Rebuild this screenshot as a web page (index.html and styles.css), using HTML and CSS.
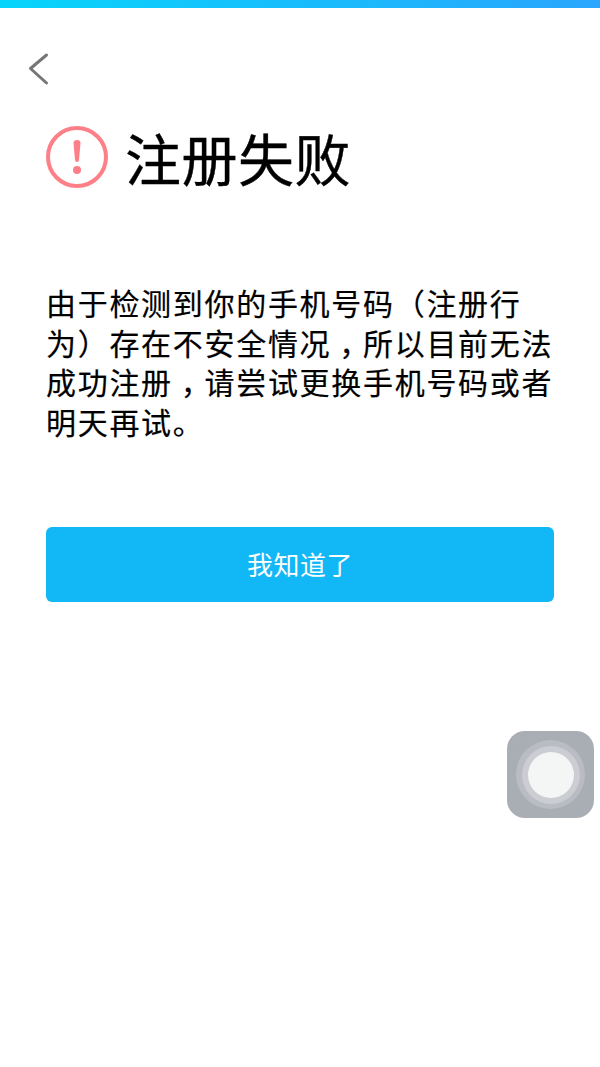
FILE: index.html
```html
<!DOCTYPE html>
<html lang="zh-CN">
<head>
    <meta charset="UTF-8">
    <title>注册失败</title>
    <link rel="stylesheet" href="styles.css">
</head>
<body>

<div class="top-bar"></div>

<div class="back-row">
    <svg class="back-icon" width="24" height="36" viewBox="0 0 24 36">
        <path d="M19.5 3 L3.5 16.5 L19.5 31" fill="none" stroke="#767676" stroke-width="3" stroke-linecap="round" stroke-linejoin="round"/>
    </svg>
</div>

<div class="content">
    <div class="title-row">
        <svg class="warn-icon" width="62" height="62" viewBox="0 0 62 62">
            <circle cx="31" cy="31" r="29" fill="none" stroke="#fd7f87" stroke-width="4"/>
            <path d="M27.5 17 Q27.5 14 31 14 Q34.5 14 34.5 17 L33 34 Q32.8 36 31 36 Q29.2 36 29 34 Z" fill="#fd7f87"/>
            <circle cx="31" cy="44" r="4" fill="#fd7f87"/>
        </svg>
        <h1>注册失败</h1>
    </div>

    <p class="message">由于检测到你的手机号码（注册行为）存在不安全情况<span class="comma">，</span>所以目前无法成功注册<span class="comma">，</span>请尝试更换手机号码或者明天再试。</p>

    <button class="ok-btn">我知道了</button>
</div>

<div class="float-ball">
    <div class="ring-outer">
        <div class="ring-inner">
            <div class="ball-core"></div>
        </div>
    </div>
</div>

</body>
</html>
```

FILE: styles.css
```css
body {
    margin: 0;
    height: 1067px;
    position: relative;
    overflow: hidden;
    background-color: #fff;
    font-family: "Noto Sans CJK SC", "Noto Sans", sans-serif;
    color: #000;
}

.top-bar {
    height: 8px;
    background: linear-gradient(to right, #06d5fb, #2aa5fd);
}

.back-row {
    padding: 44px 0 0 27px;
    height: 36px;
}

.back-icon {
    display: block;
}

.content {
    padding: 0 46px;
}

.title-row {
    display: flex;
    align-items: center;
    gap: 17px;
    margin-top: 38px;
}

.warn-icon {
    flex: none;
}

h1 {
    margin: 0;
    font-size: 56px;
    font-weight: 400;
    line-height: 62px;
    letter-spacing: 0.5px;
    -webkit-text-stroke: 0.4px #000;
}

.message {
    margin: 95px 0 0;
    font-size: 30px;
    line-height: 39.5px;
    letter-spacing: 1.7px;
    -webkit-text-stroke: 0.2px #000;
}

/* the comma sits in the middle of its cell in the reference */
.comma {
    display: inline-block;
    box-sizing: border-box;
    width: 31.7px;
    padding-left: 8px;
    letter-spacing: -6.3px;
}

.ok-btn {
    display: block;
    width: 100%;
    height: 75px;
    margin-top: 86px;
    padding: 0 0 2px;
    border: none;
    border-radius: 6px;
    background-color: #12b7f5;
    color: #fff;
    font-family: inherit;
    font-size: 26px;
    letter-spacing: 0.5px;
}

.float-ball {
    position: absolute;
    left: 507px;
    top: 731px;
    width: 87px;
    height: 87px;
    border-radius: 18px;
    background-color: #a9adb4;
    display: flex;
    align-items: center;
    justify-content: center;
}

.ring-outer {
    width: 69px;
    height: 69px;
    border-radius: 50%;
    background-color: #b9bcc2;
    display: flex;
    align-items: center;
    justify-content: center;
}

.ring-inner {
    width: 58px;
    height: 58px;
    border-radius: 50%;
    background-color: #cbcdd2;
    display: flex;
    align-items: center;
    justify-content: center;
}

.ball-core {
    width: 46px;
    height: 46px;
    border-radius: 50%;
    background-color: #f4f5f5;
}
```
